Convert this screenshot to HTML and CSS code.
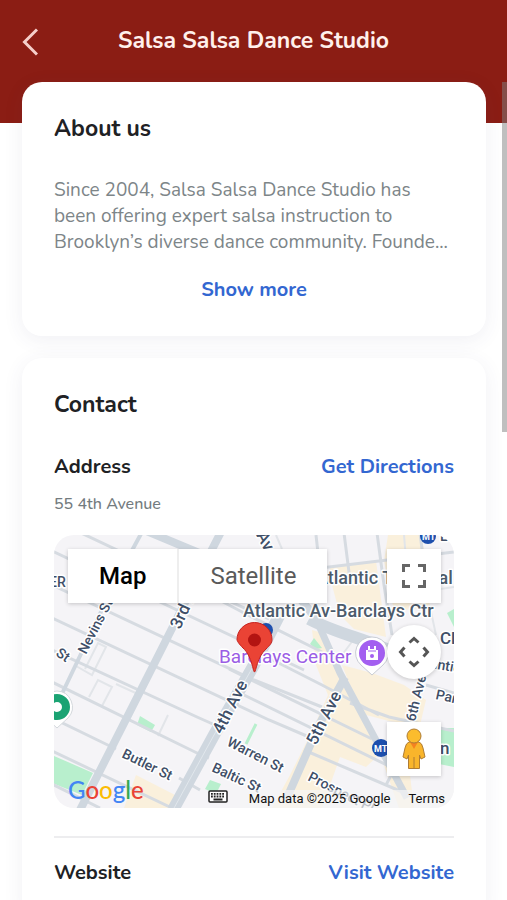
FILE: index.html
```
<!DOCTYPE html>
<html lang="en">
<head>
<meta charset="UTF-8" />
<meta name="viewport" content="width=device-width, initial-scale=1" />
<title>Salsa Salsa Dance Studio</title>
<link rel="stylesheet" href="styles.css">
</head>
<body>

<!-- Header -->
<header class="header">
  <button class="back" aria-label="Back">
    <svg width="18" height="30" viewBox="0 0 18 30"><path d="M17 2.500 4.500 15 17 27.500" /></svg>
  </button>
  <h1>Salsa Salsa Dance Studio</h1>
</header>

<main class="content">

  <!-- About -->
  <section class="card">
    <h2>About us</h2>
    <p class="about">Since 2004, Salsa Salsa Dance Studio has been offering expert salsa instruction to Brooklyn’s diverse dance community. Founde...</p>
    <button class="link show-more">Show more</button>
  </section>

  <!-- Contact -->
  <section class="card">
    <h2>Contact</h2>
    <div class="row address-row">
      <h3>Address</h3>
      <a class="link" href="#directions">Get Directions</a>
    </div>
    <p class="address">55 4th Avenue</p>

    <div class="map">
      <svg class="map-canvas" viewBox="0 0 400 273" preserveAspectRatio="xMidYMid slice" role="img" aria-label="Map of 55 4th Avenue">
        <rect width="400" height="273" fill="#f5f4f7" />

        <!-- Commercial areas and parks -->
        <g fill="#faf0dc">
          <path d="M276 32 322 26 332 102 300 94 286 80 278 50Z" />
          <path d="M334 0H366L372 20 376 72 340 76 330 26Z" />
          <path d="M258 95 268 98 288 138 296 150 330 215 312 232 286 222 268 273H218L236 240 256 200 274 160 262 130Z" />
          <path d="M288 130 318 138 350 150 372 165 366 190 335 186 312 180 296 150Z" />
          <path d="M334 205 356 240 360 273H345L330 230Z" />
          <path d="M82 240 125 262 118 273H70Z" />
        </g>
        <g fill="#b8efcd">
          <path d="M-2 220 39 238 28 260-2 248Z" />
          <path d="M86 181 101 190 97 197 83 190Z" />
          <path d="M156 245 167 249 162 259 151 254Z" />
          <path d="M260 103 268 113 262 114 256 109Z" />
          <path d="M340 193H400V232L370 226Z" />
          <path d="M393 78 400 74V92Z" />
        </g>
        <path d="M202 189 192 209" stroke="#b8efcd" stroke-width="3" />

        <!-- Small lanes -->
        <g fill="none" stroke="#e2e5e9" stroke-width="2">
          <path d="M22 131 38 140 52 112 44 108 31 134M62 149 86 160M35 162 44 145 58 152 48 171M114 180 104 201" />
          <path d="M222 0 228 14M350 0 352 24M346 60 400 52M376 72 382 100M288 120 300 104" />
        </g>

        <!-- Cross streets -->
        <g fill="none" stroke="#d6dbe1" stroke-width="3">
          <path d="M-4 15 70 50 250 135M-4 49 200 145 268 172M-4 82 215 185 262 205M-4 114 143 182 170 194M-4 146 143 218 155 223" />
          <path d="M-4 182 62 214M125 243 146 255M-4 215 118 273M-4 248 46 273M25-3 133 48 190 78 268 117" />
          <path d="M150 55 215 84M205 118 268 150 325 180M175 134 318 204M296 168 335 182 400 196M250 35 400 17" />
          <path d="M190 160 345 236M250 215 360 262M262 0 264 18M290-2 296 45M323-2 330 50 338 100M366-2 370 30" />
          <path d="M372 150 400 158M345 225 332 250" />
        </g>

        <!-- Avenues -->
        <g fill="none" stroke="#cfd7df" stroke-width="8">
          <path d="M168-5 150 30 96 137 26 275" />
          <path d="M119 275 160 200 200 130 228 75" stroke-width="12" />
          <path d="M88-3 62 45 36 100 5 165" stroke-width="4" />
          <path d="M232 265 266 188 291 142" />
          <path d="M205-5 239 55 263 86 286 138 353 263" stroke-width="7" />
          <path d="M90-5 150 20 239 55 263 84" />
          <path d="M255 84C285 100 315 104 345 120" stroke-width="12" />
        </g>
        <path d="M119 275 160 200 200 130" fill="none" stroke="#e1e7ec" stroke-width="1" />

        <!-- Subway stations -->
        <g class="subway">
          <circle cx="374" cy="1" r="8" /><circle cx="327" cy="213" r="9" /><circle cx="212" cy="95" r="7" />
          <text x="368" y="5">MT</text><text x="320" y="217">MT</text>
        </g>

        <!-- Street and place names -->
        <g class="labels">
          <text class="small" x="-5" y="52">ER</text>
          <text transform="translate(32 120) rotate(-63)">Nevins St</text>
          <text transform="translate(1 120) rotate(35)">St</text>
          <text class="large" transform="translate(126 95) rotate(-65)">3rd Ave</text>
          <text class="large" transform="translate(202 0) rotate(62)">Ave</text>
          <text class="station" x="262" y="49">Atlantic Terminal</text>
          <text class="station" x="189" y="82">Atlantic Av-Barclays Ctr</text>
          <text class="large" transform="translate(168 200) rotate(-63)">4th Ave</text>
          <text class="large" transform="translate(262 211) rotate(-63)">5th Ave</text>
          <text transform="translate(361 187) rotate(-76)">6th Ave</text>
          <text transform="translate(67 222) rotate(26)">Butler St</text>
          <text transform="translate(172 210) rotate(27)">Warren St</text>
          <text transform="translate(157 236) rotate(25)">Baltic St</text>
          <text transform="translate(253 245) rotate(27)">Prospect Pl</text>
          <text transform="translate(381 164) rotate(12)">Park</text>
          <text transform="translate(372 132) rotate(10)">lantic</text>
          <text class="large" x="386" y="109">Cl</text>
          <text class="large" x="386" y="219">n</text>
          <text x="386" y="6">L</text>
          <text class="venue" x="165" y="128">Barclays Center</text>
        </g>

        <!-- Arena marker -->
        <path d="M318 102a16 16 0 0 0-11 28l11 10 11-10a16 16 0 0 0-11-28Z" fill="#fff" stroke="#c9cdd4" stroke-width="1" />
        <circle cx="318" cy="118" r="13" fill="#a35ff0" />
        <path d="M312 115H314V111H316V114H320V111H322V115H324V125H312Z" fill="#fff" />
        <path d="M314 116H322" stroke="#a35ff0" stroke-width="1" />
        <circle cx="318" cy="121" r="2" fill="#a35ff0" />

        <!-- Green marker -->
        <path d="M3 156a16 16 0 0 1 11 27L3 193-8 183A16 16 0 0 1 3 156Z" fill="#fff" stroke="#d4d8dc" stroke-width="1" />
        <circle cx="3" cy="172" r="9" fill="#fff" stroke="#1ba373" stroke-width="8" />

        <!-- Location pin -->
        <path d="M200.500 137C199 137 198 121 189 113 185 109 183 106 183 104.500A17.500 17 0 1 1 218 104.500C218 108 216 110 212 114 203 122 202 137 200.500 137Z" fill="#ea4335" stroke="#c5221f" stroke-width="1" />
        <circle cx="200.500" cy="105" r="6.500" fill="#b31412" />
      </svg>

      <div class="map-type">
        <button class="selected">Map</button>
        <button>Satellite</button>
      </div>

      <div class="map-controls">
        <button aria-label="Toggle fullscreen view">
          <svg width="26" height="26" viewBox="0 0 26 26" fill="none" stroke="#666" stroke-width="3"><path d="M2.500 9V2.500H9M17 2.500H23.500V9M23.500 17V23.500H17M9 23.500H2.500V17" /></svg>
        </button>
        <button class="round" aria-label="Map camera controls">
          <svg width="32" height="32" viewBox="0 0 32 32" fill="none" stroke="#555" stroke-width="3"><path d="M11.500 6.500 16 2.500 20.500 6.500M25.500 11.500 29.500 16 25.500 20.500M20.500 25.500 16 29.500 11.500 25.500M6.500 20.500 2.500 16 6.500 11.500" /></svg>
        </button>
        <button class="pegman" aria-label="Street View">
          <svg width="24" height="42" viewBox="0 0 24 42" stroke="#ae7c35" stroke-width="1" stroke-linejoin="round">
            <path d="M7 14H17Q20 15 21 20L23 29 19 31 17.500 27V40.500H6.500V27L5 31 1 29 3 20Q4 15 7 14Z" fill="#f9b52b" />
            <path d="M8 14H16L12 21Z" fill="#f58220" stroke="none" />
            <path d="M12 29V40" />
            <circle cx="12" cy="8" r="7" fill="#fbbc2d" />
          </svg>
        </button>
      </div>

      <div class="map-footer">
        <a class="google" href="#google" aria-label="Google"><span class="blue">G</span><span class="red">o</span><span class="yellow">o</span><span class="blue">g</span><span class="green">l</span><span class="red">e</span></a>
        <button class="keyboard" aria-label="Keyboard shortcuts">
          <svg width="20" height="13" viewBox="0 0 20 13"><rect x="1" y="1" width="18" height="11" rx="1" fill="#fff" stroke="#222" stroke-width="1.500" /><path d="M3 3.800H17M3 6.500H17" stroke="#222" stroke-width="1.800" stroke-dasharray="1.800 1" /><path d="M5.500 9.500H14.500" stroke="#222" stroke-width="1.800" /></svg>
        </button>
        <span class="credit">Map data ©2025 Google</span>
        <a class="terms" href="#terms">Terms</a>
      </div>
    </div>

    <div class="row website-row">
      <h3>Website</h3>
      <a class="link" href="#website">Visit Website</a>
    </div>
  </section>

</main>

<div class="scroll-thumb"></div>

</body>
</html>
```
FILE: styles.css
```
/* Reset & base */
* {
  box-sizing: border-box;
}
html {
  scrollbar-width: none;
}
body {
  margin: 0;
  font-family: "Nunito", "Lato", sans-serif;
  background: #fff;
  color: #202124;
  overflow-x: hidden;
}
h1, h2, h3, p {
  margin: 0;
}
button {
  font: inherit;
  border: none;
  padding: 0;
  background: none;
  cursor: pointer;
}
a {
  color: inherit;
  text-decoration: none;
}

/* Header */
.header {
  display: grid;
  grid-template-columns: 40px 1fr 40px;
  align-items: start;
  height: 123px;
  padding: 25px 20px 0;
  background: #8b1d14;
  color: #fff0ec;
}
.header h1 {
  font-size: 23px;
  line-height: 32px;
  font-weight: 700;
  text-align: center;
}
.back {
  display: flex;
  padding-top: 2px;
}
.back path {
  fill: none;
  stroke: #f6cfca;
  stroke-width: 3;
}

/* Cards */
.content {
  display: flex;
  flex-direction: column;
  gap: 22px;
  margin-top: -41px;
  padding: 0 21px 32px 22px;
}
.card {
  padding: 32px;
  border-radius: 20px;
  background: #fff;
  box-shadow: 0 4px 20px rgba(60, 64, 110, 0.08);
}
.card h2 {
  font-size: 23px;
  line-height: 30px;
  font-weight: 700;
}
.card h3,
.link {
  font-size: 20px;
  line-height: 28px;
  font-weight: 700;
}
.link {
  color: #3367d1;
}
.about {
  margin-top: 33px;
  font-size: 19px;
  line-height: 26px;
  color: #7d8588;
}
.show-more {
  display: block;
  margin: 21px auto 0;
}
.row {
  display: flex;
  justify-content: space-between;
}
.address-row {
  margin-top: 33px;
}
.address {
  margin-top: 11px;
  font-size: 16px;
  line-height: 24px;
  font-weight: 500;
  color: #737b7e;
}
.website-row {
  margin-top: 28px;
  padding-top: 21px;
  border-top: 2px solid #ededef;
}

/* Map */
.map {
  position: relative;
  height: 273px;
  margin-top: 19px;
  border-radius: 20px;
  overflow: hidden;
  font-family: Roboto, sans-serif;
}
.map-canvas {
  display: block;
  width: 100%;
  height: 100%;
}
.labels {
  font-size: 14px;
  font-weight: 500;
  fill: #3f4f68;
  stroke: #fff;
  stroke-width: 3px;
  stroke-linejoin: round;
  paint-order: stroke;
}
.labels .large {
  font-size: 17px;
}
.labels .station {
  font-size: 18px;
  fill: #4c5b6b;
}
.labels .venue {
  font-size: 19px;
  font-weight: 400;
  fill: #9b5de5;
}
.subway {
  fill: #1d4fad;
  font-size: 9px;
  font-weight: 700;
}
.subway text {
  fill: #fff;
}

.map-type {
  position: absolute;
  top: 14px;
  left: 14px;
  display: flex;
  box-shadow: 0 1px 4px rgba(0, 0, 0, 0.2);
}
.map-type button {
  height: 54px;
  padding: 0 31px;
  background: #fff;
  color: #5a5a5a;
  font-size: 24px;
}
.map-type .selected {
  border-right: 2px solid #eee;
  color: #000;
  font-weight: 500;
}

.map-controls {
  position: absolute;
  top: 14px;
  right: 13px;
  bottom: 32px;
  display: flex;
  flex-direction: column;
}
.map-controls button {
  display: flex;
  align-items: center;
  justify-content: center;
  width: 54px;
  height: 54px;
  background: #fff;
  box-shadow: 0 1px 4px rgba(0, 0, 0, 0.2);
}
.map-controls .round {
  margin-top: 22px;
  border-radius: 50%;
}
.map-controls .pegman {
  margin-top: auto;
}

.map-footer {
  position: absolute;
  left: 14px;
  right: 0;
  bottom: 0;
  display: flex;
  align-items: center;
  height: 18px;
  font-size: 13px;
  line-height: 18px;
  color: #111;
}
.credit,
.terms {
  padding: 0 9px;
  background: rgba(245, 245, 245, 0.7);
}
.google {
  margin-right: auto;
  padding-bottom: 18px;
  font-family: Lato, sans-serif;
  font-size: 24px;
  line-height: 28px;
  font-weight: 500;
}
.google .blue {
  color: #4285f4;
}
.google .red {
  color: #ea4335;
}
.google .yellow {
  color: #fbbc05;
}
.google .green {
  color: #34a853;
}
.keyboard {
  display: flex;
  margin-right: 12px;
  padding-bottom: 6px;
}

/* Scroll position */
.scroll-thumb {
  position: fixed;
  top: 82px;
  right: 0;
  width: 5px;
  height: 350px;
  background: rgba(128, 128, 128, 0.5);
}
```
